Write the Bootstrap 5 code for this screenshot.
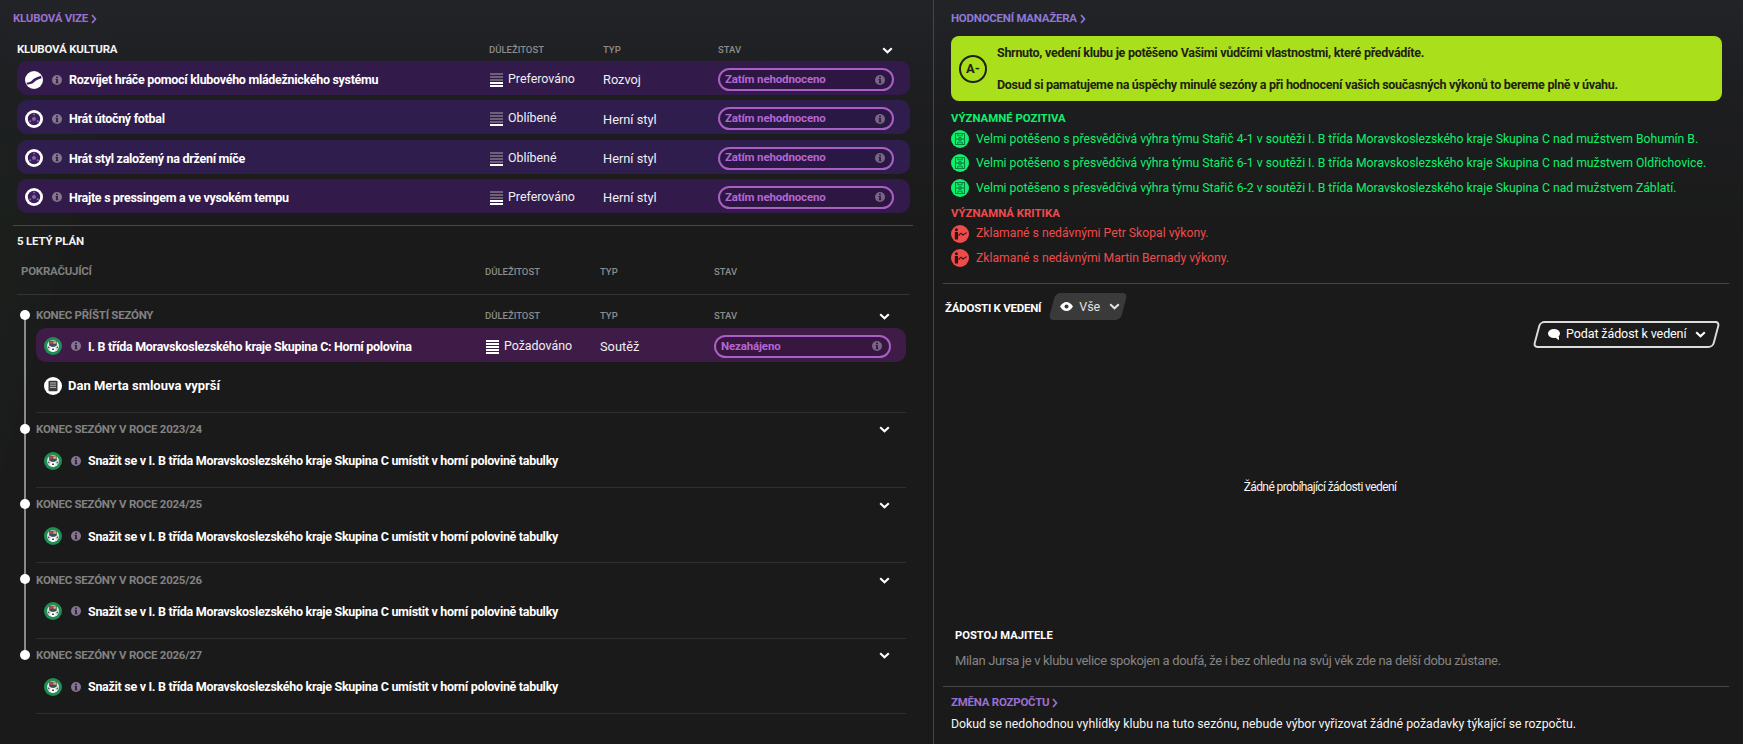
<!DOCTYPE html>
<html lang="cs">
<head>
<meta charset="utf-8">
<title>Klubová vize</title>
<link href="https://cdn.jsdelivr.net/npm/bootstrap@5.3.0/dist/css/bootstrap.min.css" rel="stylesheet">
<style>
html,body{height:744px;overflow:hidden}
body{font-family:Roboto,"Liberation Sans",sans-serif;color:#fff;font-size:13px;line-height:1.2;
 background:
 linear-gradient(180deg,rgba(34,36,40,.95) 0,rgba(30,31,34,.8) 90px,rgba(26,26,26,0) 235px),
 linear-gradient(106deg,transparent 12px,rgba(40,90,50,.10) 30px,rgba(40,90,50,.03) 130px,transparent 131px),
 #1a1a1a}
.shell{height:744px}
.pane-l{width:934px;flex:none;border-right:1px solid #454545}
.pane-r{flex:1;min-width:0;height:744px}
.crumb{height:36px;padding-left:13px;padding-top:2px;color:#9a6fd0;font-weight:700;font-size:11.5px;letter-spacing:-.25px;text-transform:uppercase;flex:none}
.crumb svg{margin-left:3px}
.crumb-b{color:#8f78d8;padding-left:17px}
.subhead{font-weight:700;font-size:11.5px;letter-spacing:-.2px;text-transform:uppercase;color:#f2f2f2}
.colhead{font-size:9.5px;font-weight:500;color:#8c8c8c;text-transform:uppercase}
.grid-a{display:grid;grid-template-columns:472px 114px 115px 176px 1fr;align-items:center}
.grid-b{display:grid;grid-template-columns:449px 115px 114px 177px 1fr;align-items:center}
.culture-head{height:25px;padding-top:2px;margin-left:17px;margin-right:23px}
.rows{display:flex;flex-direction:column;gap:5.33px;margin:0 23px 0 17px}
.goal{height:34px;border-radius:10px;padding-top:3px}
.goal-a{background:#321a4b}
.goal-b{background:#2e1d4d}
.goal-c{background:#3f1c47}
.goal-main{padding-left:8px;display:flex;align-items:center;font-weight:700;font-size:12.5px;letter-spacing:-.3px;color:#fff;white-space:nowrap}
.ic{width:18px;height:18px;flex:none}
.info{width:10px;height:10px;margin:0 7px 0 9px;flex:none;color:#85758f}
.imp{display:flex;align-items:center;color:#f0eef2;gap:5px;font-size:12.4px}
.imp svg{width:13px;height:14px;margin-left:1px;margin-top:1px}
.kind{color:#f0eef2;padding-top:1px;font-size:12.8px}
.pill{height:23px;border:2px solid #a95fc3;border-radius:12px;display:flex;align-items:center;justify-content:space-between;padding:0 7px 0 5px;color:#b566d2;font-weight:700;font-size:11.5px;letter-spacing:-.15px;background:rgba(20,8,30,.18)}
.pill svg{width:10px;height:10px;color:#7c6488}
.chev-pull{margin-left:-12px}
.rule{border-top:1px solid #474747}
.rule-top{margin:12px 20px 0 13px}
.plan-title{height:32px;padding-left:17px}
.plan-head{height:37px;padding-top:2px;padding-bottom:11px;margin:0 23px 0 17px;border-bottom:1px solid #333}
.plan-sub{font-size:11.5px;letter-spacing:-.25px;font-weight:700;color:#7f7f7f;text-transform:uppercase}
.timeline{position:relative;padding-left:36px;margin-right:27px}
.timeline::before{content:"";position:absolute;left:24px;top:20px;height:339px;width:2px;background:#8a8a8a}
.stage{position:relative;border-bottom:1px solid #2f2f2f;height:75.25px;padding-top:5px}
.stage-first{height:118px;padding-top:9px}
.stage::before{content:"";position:absolute;left:-16px;top:11px;width:10px;height:10px;border-radius:50%;background:#fff}
.stage-first::before{top:15px}
.stage-head{height:24px}
.stage-head .plan-sub{font-weight:700;color:#828282}
.plain{height:34px;margin-top:2px}
.note{height:34px;margin-top:7px;padding-left:8px;font-weight:700;display:flex;align-items:center;gap:6px}
.chev{width:11px;height:7px}
.verdict{margin:0 21px 0 17px;height:65px;background:#aae01b;border-radius:8px;color:#1e2212;font-weight:700;font-size:12.5px;letter-spacing:-.29px;padding:0 8px;flex:none}
.grade{width:28px;height:28px;border:2px solid #1e2212;border-radius:50%;font-size:13px;letter-spacing:0;flex:none;margin-right:10px}
.verdict p{margin:0;line-height:32px}
.tone{margin:0 0 0 17px;font-size:11.4px;font-weight:700;text-transform:uppercase}
.tone-top{margin-top:11px}
.tone-mid{margin-top:6.5px}
.facts{margin-top:1px}
.fact{margin-left:17px;height:24.5px;font-size:12.2px;display:flex;align-items:center;white-space:nowrap}
.fact svg{width:18px;height:18px;margin-right:7px;flex:none}
.good{color:#0df06b}
.bad{color:#f04b4b}
.rule-r{margin:0 14px 0 9px}
.rule-gap{margin-top:12.6px}
.ask-row{margin-top:9px}
.ask-title{font-size:11.5px;letter-spacing:-.25px;font-weight:700;text-transform:uppercase;margin-left:11px;padding-top:5px}
.slant{position:relative;isolation:isolate;border:0;color:#fff;font-size:13px;height:27px;display:inline-flex;align-items:center;padding:0;--bs-btn-color:#fff;--bs-btn-hover-color:#fff;--bs-btn-active-color:#fff}
.slant::before{content:"";position:absolute;inset:0 3px;transform:skewX(-15deg);border-radius:5px;z-index:-1}
.slant-fill{margin-left:8px;width:78px;padding:1px 0 0 11px;font-size:12.5px;color:#e4e4e4}
.slant-fill::before{background:#3a3a3a}
.slant-fill .chev{margin-left:9px}
.slant-fill .eye{margin-right:6px}
.slant-line{width:187px;padding-left:15px;font-size:12.5px;letter-spacing:-.1px}
.slant-line::before{border:2px solid #dcdcdc;background:#1c1c1c}
.slant-line .chev{margin-left:9px}
.slant-line .bub{margin-right:6px}
.lodge{margin-top:1px;margin-right:23px}
.empty-zone{flex:1;font-size:12px;letter-spacing:-.6px;color:#f5f5f5;min-height:0;padding-right:37px;padding-top:3px}
.owner-title{height:26px;flex:none;margin-left:21px;font-size:11.2px;font-weight:700;text-transform:uppercase}
.owner-text{margin-left:21px;height:37px;flex:none;padding-top:4px;color:#858585;font-size:13px;letter-spacing:-.33px;white-space:nowrap}
.foot-crumb{height:30px;color:#9a6fd0}
.foot-text{margin-left:17px;height:27px;flex:none;font-size:12.3px;color:#f5f5f5}
</style>
</head>
<body>
<svg width="0" height="0" class="position-absolute">
 <defs>
 <symbol id="i-info" viewBox="0 0 10 10"><circle cx="5" cy="5" r="5" fill="currentColor"/><rect x="4.100" y="1.600" width="1.800" height="1.600" fill="#2c1c3c"/><path d="M3.600 4h2.300v3.400h.6v.9H3.600v-.9h.6V4.900h-.6z" fill="#2c1c3c"/></symbol>
 <symbol id="i-ball" viewBox="0 0 18 18"><circle cx="9" cy="9" r="9" fill="#fff"/><circle cx="9" cy="9" r="6.200" fill="#3b1c5c"/><path d="M9 6.600l2.200 1.600-.8 2.500H7.600l-.8-2.500z" fill="#8266a0"/><circle cx="5.200" cy="11.300" r="1.100" fill="#8266a0"/><circle cx="12.800" cy="11.300" r="1.100" fill="#8266a0"/><circle cx="9" cy="4.400" r="1" fill="#8266a0"/></symbol>
 <symbol id="i-youth" viewBox="0 0 18 18"><circle cx="9" cy="9" r="9" fill="#fff"/><path d="M1.500 11.800C4 11.500 5.500 11 7 9.500S10 6.800 16 4.800l.6 2.400C12 8.500 10.500 10 9 11.300s-3 2.200-7 2.300z" fill="#3b1c5c"/></symbol>
 <symbol id="i-crest" viewBox="0 0 18 18"><circle cx="9" cy="9" r="9" fill="#1f8f55"/><circle cx="9" cy="9" r="6" fill="#dfe5e0"/><path d="M5.200 3.800h7.600v4.600L9 10.400 5.200 8.400z" fill="#3a4d66"/><path d="M5.700 4.300h3v2.400h-3z" fill="#c9463e"/><path d="M9.300 4.300h3v2.400h-3z" fill="#d9bb3c"/><circle cx="9" cy="12.300" r="2.500" fill="#fff"/><path d="M9 11.300l1 .7-.4 1.100H8.400L8 12z" fill="#222"/><path d="M3.600 9.500l1.800.5-.3 1.800zM14.400 9.500l-1.800.5.300 1.800z" fill="#222"/></symbol>
 <symbol id="i-doc" viewBox="0 0 18 18"><circle cx="9" cy="9" r="9" fill="#fff"/><rect x="4.500" y="3.800" width="9" height="10.500" rx="1" fill="#3a3a3a"/><path d="M6 6h6M6 8.200h6M6 10.400h6" stroke="#bdbdbd" stroke-width="1"/></symbol>
 <symbol id="i-pitch" viewBox="0 0 18 18"><circle cx="9" cy="9" r="9" fill="#0df06b"/><g fill="none" stroke="#0a7f3f" stroke-width="1"><rect x="4.500" y="3.500" width="9" height="11"/><path d="M4.500 9h9"/><circle cx="9" cy="9" r="1.500"/><path d="M6.800 3.500v2.300h4.400V3.500M6.800 14.500v-2.300h4.400v2.300"/></g></symbol>
 <symbol id="i-drop" viewBox="0 0 18 18"><circle cx="9" cy="9" r="9" fill="#f04b4b"/><g fill="#2a1414"><circle cx="5.400" cy="4.700" r="1.500"/><path d="M3.800 7h3.200v7.500H3.800z"/></g><path d="M7.500 10.500l2.400-2.300 2 1.800 3.800-2.400" fill="none" stroke="#2a1414" stroke-width="1.100"/></symbol>
 <symbol id="i-chev" viewBox="0 0 11 7"><path d="M1.200 1.200 5.500 5.200 9.800 1.200" fill="none" stroke="currentColor" stroke-width="2.100"/></symbol>
 <symbol id="i-more" viewBox="0 0 6 10"><path d="M1 1l3.500 4L1 9" fill="none" stroke="currentColor" stroke-width="1.700"/></symbol>
 <symbol id="b-2" viewBox="0 0 13 14"><path d="M0 0h13v2H0zM0 3h13v2H0zM0 6h13v2H0z" fill="#6d6078"/><path d="M0 9h13v2H0zM0 12h13v2H0z" fill="#fff"/></symbol>
 <symbol id="b-1" viewBox="0 0 13 14"><path d="M0 0h13v2H0zM0 3h13v2H0zM0 6h13v2H0zM0 9h13v2H0z" fill="#6d6078"/><path d="M0 12h13v2H0z" fill="#fff"/></symbol>
 <symbol id="b-5" viewBox="0 0 13 14"><path d="M0 0h13v2H0zM0 3h13v2H0zM0 6h13v2H0zM0 9h13v2H0zM0 12h13v2H0z" fill="#fff"/></symbol>
 </defs>
</svg>

<div class="shell d-flex">
 <section class="pane-l">
  <div class="crumb d-flex align-items-center">Klubová vize<svg width="6" height="10"><use href="#i-more"/></svg></div>

  <div class="culture-head grid-a">
   <div class="subhead">Klubová kultura</div><div class="colhead">Důležitost</div><div class="colhead">Typ</div><div class="colhead">Stav</div>
   <div class="chev-pull"><svg class="chev"><use href="#i-chev"/></svg></div>
  </div>

  <div class="rows">
   <div class="goal goal-a grid-a">
    <div class="goal-main"><svg class="ic"><use href="#i-youth"/></svg><svg class="info"><use href="#i-info"/></svg>Rozvíjet hráče pomocí klubového mládežnického systému</div>
    <div class="imp"><svg><use href="#b-2"/></svg>Preferováno</div><div class="kind">Rozvoj</div>
    <div class="pill">Zatím nehodnoceno<svg><use href="#i-info"/></svg></div>
   </div>
   <div class="goal goal-b grid-a">
    <div class="goal-main"><svg class="ic"><use href="#i-ball"/></svg><svg class="info"><use href="#i-info"/></svg>Hrát útočný fotbal</div>
    <div class="imp"><svg><use href="#b-1"/></svg>Oblíbené</div><div class="kind">Herní styl</div>
    <div class="pill">Zatím nehodnoceno<svg><use href="#i-info"/></svg></div>
   </div>
   <div class="goal goal-b grid-a">
    <div class="goal-main"><svg class="ic"><use href="#i-ball"/></svg><svg class="info"><use href="#i-info"/></svg>Hrát styl založený na držení míče</div>
    <div class="imp"><svg><use href="#b-1"/></svg>Oblíbené</div><div class="kind">Herní styl</div>
    <div class="pill">Zatím nehodnoceno<svg><use href="#i-info"/></svg></div>
   </div>
   <div class="goal goal-a grid-a">
    <div class="goal-main"><svg class="ic"><use href="#i-ball"/></svg><svg class="info"><use href="#i-info"/></svg>Hrajte s pressingem a ve vysokém tempu</div>
    <div class="imp"><svg><use href="#b-2"/></svg>Preferováno</div><div class="kind">Herní styl</div>
    <div class="pill">Zatím nehodnoceno<svg><use href="#i-info"/></svg></div>
   </div>
  </div>

  <div class="rule rule-top"></div>
  <div class="plan-title subhead d-flex align-items-center">5 letý plán</div>
  <div class="plan-head d-flex align-items-center">
   <div class="plan-sub ps-1" style="width:468px">Pokračující</div><div class="colhead" style="width:115px">Důležitost</div><div class="colhead" style="width:114px">Typ</div><div class="colhead">Stav</div>
  </div>

  <div class="timeline">
   <div class="stage stage-first">
    <div class="stage-head grid-b">
     <div class="plan-sub">Konec příští sezóny</div><div class="colhead">Důležitost</div><div class="colhead">Typ</div><div class="colhead">Stav</div>
     <div class="chev-pull"><svg class="chev"><use href="#i-chev"/></svg></div>
    </div>
    <div class="goal goal-c grid-b">
     <div class="goal-main"><svg class="ic"><use href="#i-crest"/></svg><svg class="info"><use href="#i-info"/></svg>I. B třída Moravskoslezského kraje Skupina C: Horní polovina</div>
     <div class="imp"><svg><use href="#b-5"/></svg>Požadováno</div><div class="kind">Soutěž</div>
     <div class="pill">Nezahájeno<svg><use href="#i-info"/></svg></div>
    </div>
    <div class="note"><svg class="ic"><use href="#i-doc"/></svg>Dan Merta smlouva vyprší</div>
   </div>

   <div class="stage">
    <div class="stage-head d-flex justify-content-between align-items-center"><div class="plan-sub">Konec sezóny v roce 2023/24</div><svg class="chev me-3"><use href="#i-chev"/></svg></div>
    <div class="plain goal-main"><svg class="ic"><use href="#i-crest"/></svg><svg class="info"><use href="#i-info"/></svg>Snažit se v I. B třída Moravskoslezského kraje Skupina C umístit v horní polovině tabulky</div>
   </div>
   <div class="stage">
    <div class="stage-head d-flex justify-content-between align-items-center"><div class="plan-sub">Konec sezóny v roce 2024/25</div><svg class="chev me-3"><use href="#i-chev"/></svg></div>
    <div class="plain goal-main"><svg class="ic"><use href="#i-crest"/></svg><svg class="info"><use href="#i-info"/></svg>Snažit se v I. B třída Moravskoslezského kraje Skupina C umístit v horní polovině tabulky</div>
   </div>
   <div class="stage">
    <div class="stage-head d-flex justify-content-between align-items-center"><div class="plan-sub">Konec sezóny v roce 2025/26</div><svg class="chev me-3"><use href="#i-chev"/></svg></div>
    <div class="plain goal-main"><svg class="ic"><use href="#i-crest"/></svg><svg class="info"><use href="#i-info"/></svg>Snažit se v I. B třída Moravskoslezského kraje Skupina C umístit v horní polovině tabulky</div>
   </div>
   <div class="stage">
    <div class="stage-head d-flex justify-content-between align-items-center"><div class="plan-sub">Konec sezóny v roce 2026/27</div><svg class="chev me-3"><use href="#i-chev"/></svg></div>
    <div class="plain goal-main"><svg class="ic"><use href="#i-crest"/></svg><svg class="info"><use href="#i-info"/></svg>Snažit se v I. B třída Moravskoslezského kraje Skupina C umístit v horní polovině tabulky</div>
   </div>
  </div>
 </section>

 <section class="pane-r d-flex flex-column">
  <div class="crumb crumb-b d-flex align-items-center">Hodnocení manažera<svg width="6" height="10"><use href="#i-more"/></svg></div>
  <div class="verdict d-flex align-items-center">
   <div class="grade d-flex align-items-center justify-content-center">A-</div>
   <div>
    <p>Shrnuto, vedení klubu je potěšeno Vašimi vůdčími vlastnostmi, které předvádíte.</p>
    <p>Dosud si pamatujeme na úspěchy minulé sezóny a při hodnocení vašich současných výkonů to bereme plně v úvahu.</p>
   </div>
  </div>
  <div class="tone tone-top good">Významné pozitiva</div>
  <div class="facts">
   <div class="fact good"><svg><use href="#i-pitch"/></svg>Velmi potěšeno s přesvědčivá výhra týmu Stařič 4-1 v soutěži I. B třída Moravskoslezského kraje Skupina C nad mužstvem Bohumín B.</div>
   <div class="fact good"><svg><use href="#i-pitch"/></svg>Velmi potěšeno s přesvědčivá výhra týmu Stařič 6-1 v soutěži I. B třída Moravskoslezského kraje Skupina C nad mužstvem Oldřichovice.</div>
   <div class="fact good"><svg><use href="#i-pitch"/></svg>Velmi potěšeno s přesvědčivá výhra týmu Stařič 6-2 v soutěži I. B třída Moravskoslezského kraje Skupina C nad mužstvem Záblatí.</div>
  </div>
  <div class="tone tone-mid bad">Významná kritika</div>
  <div class="facts">
   <div class="fact bad"><svg><use href="#i-drop"/></svg>Zklamané s nedávnými Petr Skopal výkony.</div>
   <div class="fact bad"><svg><use href="#i-drop"/></svg>Zklamané s nedávnými Martin Bernady výkony.</div>
  </div>
  <div class="rule rule-r rule-gap"></div>
  <div class="ask-row d-flex align-items-center">
   <div class="ask-title">Žádosti k vedení</div>
   <button type="button" class="btn slant slant-fill">
    <svg class="eye" width="13" height="9" viewBox="0 0 13 9"><path d="M0 4.500C2 1.500 4 0 6.500 0S11 1.500 13 4.500C11 7.500 9 9 6.500 9S2 7.500 0 4.500z" fill="#fff"/><circle cx="6.500" cy="4.500" r="2" fill="#3a3a3a"/></svg>Vše<svg class="chev"><use href="#i-chev"/></svg>
   </button>
  </div>
  <div class="lodge d-flex justify-content-end">
   <button type="button" class="btn slant slant-line">
    <svg class="bub" width="12" height="11" viewBox="0 0 12 11"><ellipse cx="6" cy="4.500" rx="6" ry="4.500" fill="#fff"/><path d="M7 7.500h4V11C9.500 10.500 8 9.500 7 7.500z" fill="#fff"/></svg>Podat žádost k vedení<svg class="chev"><use href="#i-chev"/></svg>
   </button>
  </div>
  <div class="empty-zone d-flex align-items-center justify-content-center">Žádné probíhající žádosti vedení</div>
  <div class="owner-title d-flex align-items-center">Postoj majitele</div>
  <div class="owner-text">Milan Jursa je v klubu velice spokojen a doufá, že i bez ohledu na svůj věk zde na delší dobu zůstane.</div>
  <div class="rule rule-r"></div>
  <div class="crumb crumb-b foot-crumb d-flex align-items-center">Změna rozpočtu<svg width="6" height="10"><use href="#i-more"/></svg></div>
  <div class="foot-text">Dokud se nedohodnou vyhlídky klubu na tuto sezónu, nebude výbor vyřizovat žádné požadavky týkající se rozpočtu.</div>
 </section>
</div>
</body>
</html>
